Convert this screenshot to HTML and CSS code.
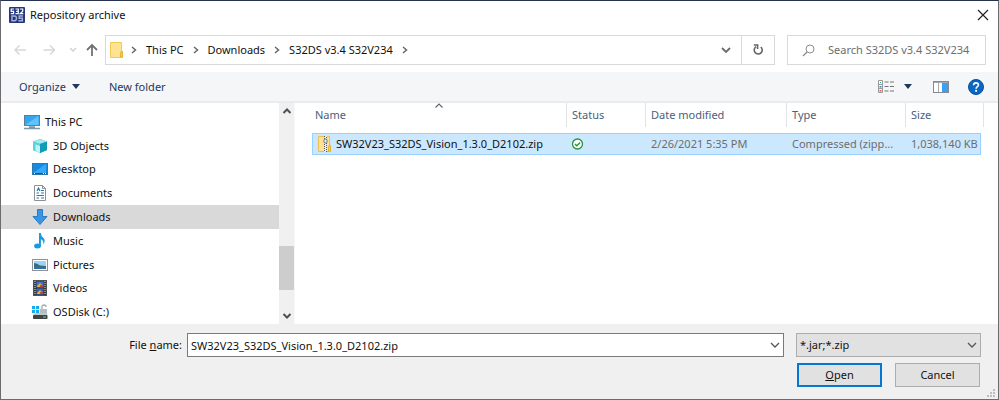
FILE: index.html
```html
<!DOCTYPE html>
<html lang="en">
<head>
<meta charset="utf-8">
<title>Repository archive</title>
<link rel="stylesheet" href="styles.css">
</head>
<body>
<div class="dialog">
  <header class="titlebar">
    <svg class="app-icon" width="16" height="16" viewBox="0 0 16 16" aria-hidden="true">
      <rect width="16" height="16" rx="1" fill="#24377d"/>
      <g fill="none" stroke="#fff" stroke-width="1.2">
        <path d="M5 2H2.2V4.3H4.6V6.7H1.8M6.5 2H9.3V6.700H6.500M7.200 4.300H9.300M10.900 2H13.700V4.300L11.200 6.700H14.300"/>
      </g>
      <g fill="none" stroke="#a7b2d8" stroke-width="1.400"><path d="M3 9H5.500Q7.500 9 7.500 11.300T5.500 13.800H3ZM14 9H10.200V11.300H13.400V13.800H9.400"/></g>
    </svg>
    <h1 class="title">Repository archive</h1>
    <button class="plain close" aria-label="Close"><svg width="12" height="12" viewBox="0 0 12 12"><path d="M1 1L11 11M11 1L1 11" fill="none" stroke="#222" stroke-width="1.200"/></svg></button>
  </header>

  <nav class="navbar" aria-label="Location">
    <div class="history">
      <button class="plain" aria-label="Back" disabled><svg width="14" height="12" viewBox="0 0 14 12"><path d="M12 6H1M5.500 1.500L1 6L5.500 10.500" fill="none" stroke="#d8d8d8" stroke-width="1.500"/></svg></button>
      <button class="plain" aria-label="Forward" disabled><svg width="14" height="12" viewBox="0 0 14 12"><path d="M1.500 6H12.500M8 1.500L12.500 6L8 10.500" fill="none" stroke="#d8d8d8" stroke-width="1.500"/></svg></button>
      <button class="plain" aria-label="Recent locations" disabled><svg width="8" height="6" viewBox="0 0 8 6"><path d="M0 1L3 4L6 1" fill="none" stroke="#d0d0d0" stroke-width="1.400"/></svg></button>
      <button class="plain up" aria-label="Up"><svg width="12" height="14" viewBox="0 0 12 14"><path d="M6 13V2M1 7L6 2L11 7" fill="none" stroke="#717171" stroke-width="1.800"/></svg></button>
    </div>
    <div class="address">
      <svg class="folder" width="14" height="16" viewBox="0 0 14 16" aria-hidden="true"><path d="M.5.5H11.500V9.500H12.500V15.500H.5Z" fill="#ffe391" stroke="#efc95a"/><path d="M10.500 15V10.500Q10.500 9.500 11.500 9.500H12.500V15Z" fill="#f5cb51" stroke="#dba928" stroke-width=".7"/></svg>
      <svg class="crumb-arrow" width="6" height="8" viewBox="0 0 6 8"><path d="M1 1L4.500 4L1 7" fill="none" stroke="#666" stroke-width="1.500"/></svg>
      <a class="crumb" href="#pc">This PC</a>
      <svg class="crumb-arrow" width="6" height="8" viewBox="0 0 6 8"><path d="M1 1L4.500 4L1 7" fill="none" stroke="#666" stroke-width="1.500"/></svg>
      <a class="crumb" href="#downloads">Downloads</a>
      <svg class="crumb-arrow" width="6" height="8" viewBox="0 0 6 8"><path d="M1 1L4.500 4L1 7" fill="none" stroke="#666" stroke-width="1.500"/></svg>
      <a class="crumb" href="#s32ds">S32DS v3.4 S32V234</a>
      <svg class="crumb-arrow" width="6" height="8" viewBox="0 0 6 8"><path d="M1 1L4.500 4L1 7" fill="none" stroke="#666" stroke-width="1.500"/></svg>
      <button class="plain address-drop" aria-label="Previous locations"><svg width="10" height="8" viewBox="0 0 10 8"><path d="M1 2L5 6L9 2" fill="none" stroke="#6b6b6b" stroke-width="1.800"/></svg></button>
      <button class="plain refresh" aria-label="Refresh"><svg width="12" height="12" viewBox="0 0 12 12"><path d="M8.800 3A4 4 0 1 1 4 2.700M1.800 1H5.600V5" fill="none" stroke="#666" stroke-width="1.600"/></svg></button>
    </div>
    <label class="search">
      <svg width="13" height="13" viewBox="0 0 13 13" aria-hidden="true"><circle cx="8" cy="5" r="4" fill="none" stroke="#8c8c94"/><path d="M5 8L1 12" stroke="#8c8c94" stroke-width="1.200"/></svg>
      <input type="search" aria-label="Search" placeholder="Search S32DS v3.4 S32V234">
    </label>
  </nav>

  <div class="toolbar">
    <button class="plain organize">Organize <svg width="8" height="5" viewBox="0 0 8 5" aria-hidden="true"><path d="M0 0H8L4 5Z" fill="#1e395b"/></svg></button>
    <button class="plain">New folder</button>
    <div class="tools">
      <button class="plain view" aria-label="Change view">
        <svg width="17" height="13" viewBox="0 0 17 13"><path d="M.5.5H4.500V12.500H.5ZM.5 4.500H4.500M.5 8.500H4.500" fill="#fff" stroke="#999"/><rect x="2" y="2" width="1" height="1" fill="#38a169"/><rect x="1.500" y="6" width="2" height="1.500" fill="#3478cf"/><rect x="1.500" y="10" width="2" height="1.500" fill="#df4b40"/><path d="M6.500 2H10.500M12 2H16M6.500 6.500H10.500M12 6.500H16M6.500 11H10.500M12 11H16" stroke="#777" stroke-width="1.200"/></svg>
        <svg width="8" height="5" viewBox="0 0 8 5"><path d="M0 0H8L4 5Z" fill="#1e395b"/></svg>
      </button>
      <button class="plain" aria-label="Preview pane"><svg width="16" height="12" viewBox="0 0 16 12"><rect x=".5" y=".5" width="15" height="11" fill="#fff" stroke="#858b91"/><path d="M1 1.500H15M5.500 2V11" stroke="#a3a9ae"/><rect x="9" y="2" width="6" height="9" fill="#3ca0ee"/></svg></button>
      <button class="plain" aria-label="Help"><svg width="16" height="16" viewBox="0 0 16 16"><circle cx="8" cy="8" r="7.500" fill="#0967c5" stroke="#07509d"/><path d="M5.600 6.200Q5.600 3.900 8 3.900T10.400 6Q10.400 7 9.300 7.700Q8.100 8.400 8.100 9.700" fill="none" stroke="#fff" stroke-width="1.600"/><circle cx="8.100" cy="11.800" r="1.100" fill="#fff"/></svg></button>
    </div>
  </div>

  <main class="content">
    <ul class="tree">
      <li class="root"><svg width="16" height="16" viewBox="0 0 16 16"><rect x=".5" y="1.500" width="15" height="10" fill="#33a6ef" stroke="#5d7e96"/><path d="M1 11L14.500 2V11Z" fill="#62c3fa"/><path d="M5 13H11M0 14.500H16" stroke="#7b99ab" stroke-width="1.300"/></svg>This PC</li>
      <li><svg width="16" height="16" viewBox="0 0 16 16"><path d="M8 1L15 3.500V12L8 15L1 12V3.500Z" fill="#23b2c9"/><path d="M1 3.500L8 1L15 3.500L8 6Z" fill="#9eeaf0"/><path d="M1 3.500L8 6V15L1 12Z" fill="#5bd3df"/><path d="M8 6L15 3.500V12L8 15Z" fill="#129bb7"/><path d="M3.500 6.500L8 8V15L3.500 13Z" fill="#c2f3f4"/></svg>3D Objects</li>
      <li><svg width="16" height="16" viewBox="0 0 16 16"><rect x=".5" y="2.500" width="15" height="11" fill="#168be5" stroke="#3476a5"/><path d="M1 12L14 3V12Z" fill="#36a8f8"/><path d="M1 12.500H15" stroke="#075aa2"/><path d="M2 12.500H3M11 12.500H12M13 12.500H14" stroke="#fff"/></svg>Desktop</li>
      <li><svg width="16" height="16" viewBox="0 0 16 16"><path d="M2.500.5H10.500L13.500 3.500V15.500H2.500Z" fill="#fff" stroke="#8d9194"/><path d="M10.500.5V3.500H13.500" fill="none" stroke="#8d9194"/><path d="M5 6L6.500 3L8 6M9 5.500H12M4.500 8H7M9 8H12M4.500 10.500H12M4.500 13H7M9 13H12" fill="none" stroke="#287eaf" stroke-width="1.200"/></svg>Documents</li>
      <li class="current"><svg width="16" height="16" viewBox="0 0 16 16"><path d="M5.500.5H10.500V7.500H15L8 15.500L1 7.500H5.500Z" fill="#3795e4" stroke="#277bc6"/></svg>Downloads</li>
      <li><svg width="16" height="16" viewBox="0 0 16 16"><ellipse cx="5.500" cy="13" rx="3.400" ry="2.500" fill="#169ae8"/><path d="M7 0H8.800Q9 3 11.500 5Q14 7.500 11.200 11.500Q12 7.500 8.900 6.300V13H7Z" fill="#169ae8"/></svg>Music</li>
      <li><svg width="16" height="16" viewBox="0 0 16 16"><rect x=".5" y="2.500" width="15" height="11" fill="#fff" stroke="#929292"/><rect x="2" y="4" width="12" height="8" fill="#9bd4f5"/><path d="M2 6Q5 6 8 8.500L14 9V12H2Z" fill="#356f79"/><path d="M2 11H14" stroke="#2e6fba" stroke-width="2"/></svg>Pictures</li>
      <li><svg width="16" height="16" viewBox="0 0 16 16"><rect x="1.500" y=".5" width="13" height="15" fill="#35363a" stroke="#515151"/><path d="M3 1V15M13 1V15" stroke="#e3e3e3" stroke-dasharray="1 1"/><rect x="4.500" y="1.500" width="7" height="6" fill="#3e72d5"/><rect x="4.500" y="8.500" width="7" height="6" fill="#3565bd"/><path d="M5 6L8 3L11 6V7H5ZM5 13L8 10L11 13V14H5Z" fill="#e8af37"/><path d="M8 5H11V7H8ZM8 12H11V14H8Z" fill="#b95234"/></svg>Videos</li>
      <li><svg width="16" height="16" viewBox="0 0 16 16"><path d="M0 2H3V5H0ZM4 2H7V5H4ZM0 6H3V9H0ZM4 6H7V9H4Z" fill="#14ade9"/><path d="M10 6V3Q10 1 12 1T14 3" fill="none" stroke="#a0a9ae" stroke-width="1.300"/><rect x="8" y="5" width="7" height="5" fill="#b4bec4"/><path d="M3 9H14L15.500 11H1Z" fill="#c3c8ca"/><rect x="1" y="11" width="14.500" height="4" rx=".7" fill="#404548"/><rect x="11" y="12.500" width="3" height="1" fill="#48e064"/></svg>OSDisk (C:)</li>
    </ul>
    <div class="scrollbar" aria-hidden="true">
      <svg width="10" height="8" viewBox="0 0 10 8"><path d="M1.500 6L5 2.500L8.500 6" fill="none" stroke="#505050" stroke-width="2"/></svg>
      <div class="track"><div class="thumb"></div></div>
      <svg width="10" height="8" viewBox="0 0 10 8"><path d="M1.500 2L5 5.500L8.500 2" fill="none" stroke="#505050" stroke-width="2"/></svg>
    </div>
    <section class="files" aria-label="Files">
      <table>
        <colgroup><col><col class="col-status"><col class="col-date"><col class="col-type"><col class="col-size"></colgroup>
        <thead><tr>
          <th>Name<svg class="sort" width="8" height="5" viewBox="0 0 8 5"><path d="M.5 4.500L4 1L7.500 4.500" fill="none" stroke="#666" stroke-width="1.200"/></svg></th>
          <th>Status</th><th>Date modified</th><th>Type</th><th>Size</th>
        </tr></thead>
        <tbody><tr>
          <td><div class="file"><svg width="14" height="16" viewBox="0 0 14 16"><path d="M.5.500H11.500V9.500H12.500V15.500H.5Z" fill="#ffe391" stroke="#e6bf50"/><path d="M10.500 15V10.500Q10.500 9.500 11.500 9.500H12.500V15Z" fill="#f5cb51" stroke="#dba928" stroke-width=".7"/><path d="M7.500 0V16" stroke="#ededed" stroke-width="3"/><path d="M6.500 0V16" stroke="#555" stroke-dasharray="1 1"/><path d="M8.500 1V16" stroke="#555" stroke-dasharray="1 1"/><rect x="6" y="3" width="3" height="4" rx="1" fill="#eee" stroke="#626262" stroke-width=".8"/></svg>SW32V23_S32DS_Vision_1.3.0_D2102.zip</div></td>
          <td><svg class="check" width="12" height="12" viewBox="0 0 12 12" role="img" aria-label="Available"><circle cx="5.500" cy="6" r="5" fill="#fff" stroke="#25933b" stroke-width="1.300"/><path d="M3 6L4.800 7.800L8.100 4.500" fill="none" stroke="#25933b" stroke-width="1.300"/></svg></td>
          <td>2/26/2021 5:35 PM</td><td>Compressed (zipp...</td><td class="size">1,038,140 KB</td>
        </tr></tbody>
      </table>
    </section>
  </main>

  <form class="footer" onsubmit="return false">
    <label class="name-label" for="filename">File <u>n</u>ame:</label>
    <div class="combo">
      <input id="filename" type="text" value="SW32V23_S32DS_Vision_1.3.0_D2102.zip">
      <svg width="10" height="6" viewBox="0 0 10 6" aria-hidden="true"><path d="M1 1L5 5L9 1" fill="none" stroke="#555" stroke-width="1.300"/></svg>
    </div>
    <div class="combo filter">
      <select aria-label="File type"><option>*.jar;*.zip</option></select>
      <svg width="10" height="6" viewBox="0 0 10 6" aria-hidden="true"><path d="M1 1L5 5L9 1" fill="none" stroke="#555" stroke-width="1.300"/></svg>
    </div>
    <div class="actions">
      <button class="action primary" type="submit"><u>O</u>pen</button>
      <button class="action" type="button">Cancel</button>
    </div>
    <svg class="grip" width="8" height="8" viewBox="0 0 8 8" aria-hidden="true"><path d="M6 0H8V2H6ZM3 3H5V5H3ZM6 3H8V5H6ZM0 6H2V8H0ZM3 6H5V8H3ZM6 6H8V8H6Z" fill="#bdbdbd"/></svg>
  </form>
</div>
</body>
</html>
```
FILE: styles.css
```css
* { box-sizing: border-box; }

body {
  margin: 0;
  background: #fff;
  color: #111;
  font: 11px/16px "Noto Sans", "Open Sans", sans-serif;
}

svg { display: block; flex: none; }
input, select, button { font: inherit; color: inherit; }

.dialog {
  min-height: 100vh;
  display: flex;
  flex-direction: column;
  border: 1px solid #6c6c70;
  border-top-color: #26304f;
}

.plain {
  display: flex;
  align-items: center;
  padding: 0;
  border: 0;
  background: none;
}

.titlebar {
  display: flex;
  align-items: center;
  gap: 5px;
  height: 28px;
  padding: 0 8px;
}
.title { margin: 0; font-size: 11px; font-weight: 400; }
.close { margin-left: auto; padding: 0 1px; }

.navbar {
  display: flex;
  gap: 12px;
  padding: 6px 12px 7px 13px;
}
.history { display: flex; align-items: center; gap: 14px; }
.up { margin-left: -6px; }
.address {
  flex: 1;
  display: flex;
  align-items: center;
  height: 30px;
  margin-left: -5px;
  padding-left: 4px;
  border: 1px solid #d9d9d9;
}
.crumb-arrow { margin: 0 9px; }
.folder + .crumb-arrow { margin-left: 7px; }
.crumb { color: inherit; text-decoration: none; white-space: nowrap; }
.address-drop { margin-left: auto; padding: 0 10px; }
.refresh {
  align-self: stretch;
  padding: 0 10px;
  border-left: 1px solid #d9d9d9;
}
.search {
  display: flex;
  align-items: center;
  gap: 13px;
  width: 199px;
  padding-left: 14px;
  border: 1px solid #d9d9d9;
}
.search input {
  flex: 1;
  min-width: 0;
  padding: 0;
  border: 0;
  outline: 0;
  background: none;
}
.search input::placeholder { color: #6d6d6d; opacity: 1; }

.toolbar {
  display: flex;
  align-items: center;
  gap: 29px;
  height: 31px;
  padding: 0 14px 0 18px;
  background: #f5f6f7;
  border-bottom: 2px solid #ebebeb;
  color: #1e395b;
}
.organize { gap: 6px; }
.tools { display: flex; align-items: center; gap: 21px; margin-left: auto; }
.view { gap: 9px; }
.tools .plain:last-child { margin-left: -2px; }

.content { flex: 1; display: flex; }
.tree {
  flex: 0 1 278px;
  display: flex;
  flex-direction: column;
  margin: 0;
  padding: 7px 0 0;
  list-style: none;
}
.tree li {
  flex: 1;
  display: flex;
  align-items: center;
  gap: 5px;
  padding-left: 31px;
}
.tree .root { padding-left: 23px; }
.tree .current { background: #d9d9d9; }

.scrollbar {
  display: flex;
  flex-direction: column;
  align-items: center;
  width: 16px;
  padding: 4px 0;
  background: #f0f0f0;
  border-right: 1px solid #f8f8f8;
}
.track {
  flex: 1;
  align-self: stretch;
  display: flex;
  flex-direction: column;
  justify-content: flex-end;
  padding-bottom: 22px;
}
.thumb { height: 44px; background: #cdcdcd; }

.files { flex: 1; padding: 0 17px 0 17px; }
table {
  width: 100%;
  table-layout: fixed;
  border-collapse: separate;
  border-spacing: 0;
}
.col-status { width: 79px; }
.col-date { width: 141px; }
.col-type { width: 119px; }
.col-size { width: 75px; }
th {
  position: relative;
  height: 24px;
  padding: 0 0 0 5px;
  border-right: 1px solid #e3e3e3;
  color: #4c607a;
  font-weight: 400;
  text-align: left;
}
th:first-child { padding-left: 3px; }
th:last-child { border-right: 0; }
th:last-child::after {
  content: "";
  position: absolute;
  top: 0;
  right: -3px;
  width: 1px;
  height: 100%;
  background: #e3e3e3;
}
.sort { position: absolute; top: 0; left: calc(50% - 4px); }
tbody::before { content: ""; display: block; height: 6px; }
td {
  height: 22px;
  padding: 0 0 0 5px;
  border: solid #99d1ff;
  border-width: 1px 0;
  background: #cce8ff;
  color: #6d6d6d;
  white-space: nowrap;
}
td:first-child { border-left-width: 1px; color: #111; }
td:last-child { border-right-width: 1px; }
.size { padding-right: 3px; text-align: right; }
.file { display: flex; align-items: center; gap: 4px; }

.footer {
  position: relative;
  display: grid;
  grid-template-columns: 181px 1fr 185px;
  gap: 5px 0;
  height: 75px;
  padding: 9px 17px 12px 0;
  background: #f0f0f0;
}
.name-label { align-self: center; text-align: right; }
.combo { position: relative; height: 24px; margin-left: 5px; }
.filter { margin-left: 0; }
.combo input, .combo select {
  display: block;
  width: 100%;
  height: 100%;
  margin: 0;
  padding: 0 3px;
  border: 1px solid #7a7a7a;
  border-radius: 0;
  outline: 0;
  background: #fff;
  appearance: none;
}
.combo select { border-color: #adadad; background: #e1e1e1; }
.combo svg {
  position: absolute;
  right: 4px;
  top: 9px;
  pointer-events: none;
}
.footer > .combo:not(.filter) { margin-right: 12px; }
.actions { grid-column: 3; display: flex; justify-content: space-between; padding: 0 1px; }
.action {
  width: 85px;
  height: 24px;
  padding: 0;
  border: 1px solid #adadad;
  background: #e1e1e1;
}
.primary { border: 2px solid #0078d7; }
.grip { position: absolute; right: 3px; bottom: 2px; }
```
